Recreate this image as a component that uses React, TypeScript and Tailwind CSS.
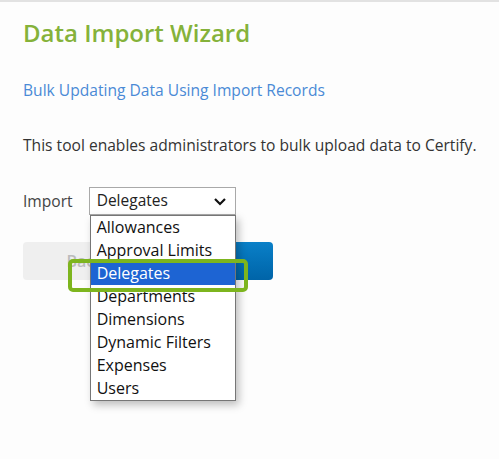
import React from "react";

const items = [
  "Allowances",
  "Approval Limits",
  "Delegates",
  "Departments",
  "Dimensions",
  "Dynamic Filters",
  "Expenses",
  "Users",
];

export default function App() {
  return (
    <div
      className="w-[499px] h-[459px] bg-[#fdfdfd] border-t-2 border-[#e2e2e2] relative overflow-hidden"
      style={{ fontFamily: '"Open Sans", sans-serif' }}
    >
      <div className="pl-[23px] pt-[15px]">
        <h1 className="text-[24px] leading-[32px] font-semibold text-[#85b23a]">Data Import Wizard</h1>
        <div className="mt-[30px] text-[15.6px] leading-[22px] text-[#4a8ad6]">
          Bulk Updating Data Using Import Records
        </div>
        <p className="mt-[33px] text-[15.6px] leading-[22px] text-[#333333]">
          This tool enables administrators to bulk upload data to Certify.
        </p>
        <div className="mt-[31px] flex items-center gap-[16px]">
          <span className="text-[15.6px] leading-[22px] text-[#444444]">Import</span>
          <div className="relative">
            <div className="w-[147px] h-[28px] border border-[#a9a9a9] bg-white flex items-center justify-between pl-[7px] pr-[7px] text-[15.5px] text-[#222222]">
              <span>Delegates</span>
              <svg width="14" height="9" viewBox="0 0 14 9" className="mr-[1px]">
                <path d="M2 2 L7 7 L12 2" fill="none" stroke="#111" strokeWidth="2.2" />
              </svg>
            </div>
            <div className="absolute left-[1px] top-[28px] w-[146px] bg-white border border-[#767676] shadow-[3px_4px_8px_rgba(0,0,0,0.25)] z-10">
              {items.map((it) => (
                <div
                  key={it}
                  className={
                    "h-[23px] pl-[6px] text-[16px] leading-[23px] " +
                    (it === "Delegates" ? "bg-[#1d64d3] text-white" : "text-[#111111]")
                  }
                >
                  {it}
                </div>
              ))}
            </div>
          </div>
        </div>
        <div className="mt-[27px] flex gap-[10px]">
          <div className="w-[124px] h-[38px] rounded-[4px] bg-[#efefef] text-[#bcbcbc] text-[16px] font-semibold flex items-center justify-center">
            Back
          </div>
          <div className="w-[116px] h-[38px] rounded-[4px] bg-gradient-to-b from-[#0a80c8] to-[#0064a8] text-white text-[16px] flex items-center justify-center">
            Next
          </div>
        </div>
      </div>
      <div className="absolute left-[68px] top-[257px] w-[180px] h-[33px] rounded-[5px] border-[4px] border-[#7db51e] z-20" />
    </div>
  );
}
